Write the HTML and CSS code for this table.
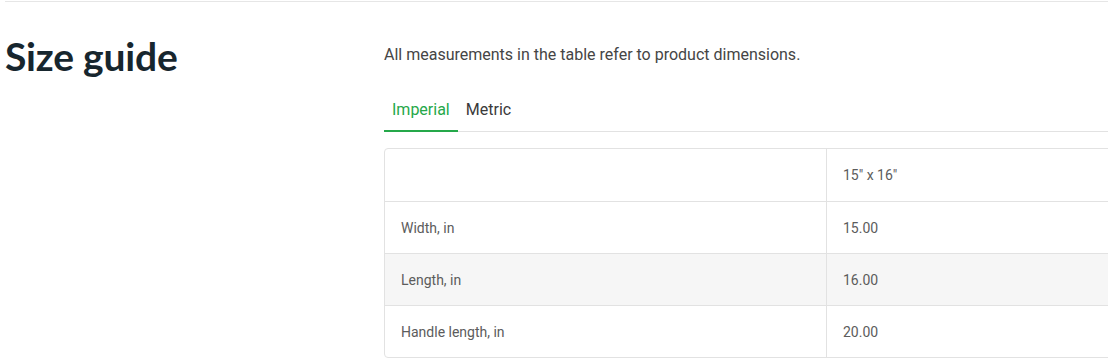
FILE: index.html
```html
<!DOCTYPE html>
<html lang="en">
<head>
    <meta charset="UTF-8">
    <meta name="viewport" content="width=device-width, initial-scale=1.0">
    <title>Size guide</title>
    <link rel="stylesheet" href="styles.css">
</head>
<body>
    <section class="size-guide">
        <h2 class="size-guide-title">Size guide</h2>
        <div class="size-guide-body">
            <p class="size-guide-note">All measurements in the table refer to product dimensions.</p>
            <div class="tabs">
                <button class="tab active" type="button">Imperial</button>
                <button class="tab" type="button">Metric</button>
            </div>
            <div class="table-wrap">
                <table class="size-table">
                    <tr class="head">
                        <td></td>
                        <td>15" x 16"</td>
                    </tr>
                    <tr>
                        <td>Width, in</td>
                        <td>15.00</td>
                    </tr>
                    <tr class="shaded">
                        <td>Length, in</td>
                        <td>16.00</td>
                    </tr>
                    <tr>
                        <td>Handle length, in</td>
                        <td>20.00</td>
                    </tr>
                </table>
            </div>
        </div>
    </section>
</body>
</html>
```

FILE: styles.css
```css
html, body {
    margin: 0;
    padding: 0;
    background: #fff;
    overflow: hidden;
}
body {
    font-family: Roboto, "Liberation Sans", sans-serif;
    color: #444;
}
.size-guide {
    display: flex;
    margin: 1px 0 0 5px;
    border-top: 1px solid #e6e6e6;
    width: 1400px;
}
.size-guide-title {
    flex: 0 0 379px;
    margin: 0;
    padding-top: 31px;
    font-family: Lato, "Noto Sans", sans-serif;
    font-weight: 700;
    font-size: 39px;
    letter-spacing: -0.2px;
    color: #17262e;
}
.size-guide-body {
    width: 884px;
}
.size-guide-note {
    margin: 0;
    padding-top: 42px;
    font-size: 16px;
    line-height: 22px;
    color: #454545;
}
.tabs {
    display: flex;
    margin-top: 29px;
    border-bottom: 1px solid #e2e2e2;
    width: 724px;
}
/* active tab gets the green underline */
.tab {
    background: none;
    border: none;
    border-bottom: 2px solid transparent;
    margin-bottom: -1px;
    padding: 5px 8px 10px;
    font-family: inherit;
    font-size: 16px;
    line-height: 20px;
    color: #3a3a3a;
    cursor: pointer;
}
.tab.active {
    color: #25a84a;
    border-bottom-color: #25a84a;
}
.table-wrap {
    margin-top: 16px;
    border: 1px solid #e2e2e2;
    border-radius: 4px;
    overflow: hidden;
}
.size-table {
    width: 100%;
    border-collapse: collapse;
    table-layout: fixed;
}
.size-table td {
    height: 51px;
    padding: 0 16px;
    font-size: 14px;
    color: #5c5c5c;
    border-top: 1px solid #e2e2e2;
}
.size-table tr.head td {
    height: 52px;
    border-top: none;
}
.size-table td:first-child {
    width: 409px;
    border-right: 1px solid #e2e2e2;
}
.size-table tr.shaded td {
    background: #f6f6f6;
}
```
